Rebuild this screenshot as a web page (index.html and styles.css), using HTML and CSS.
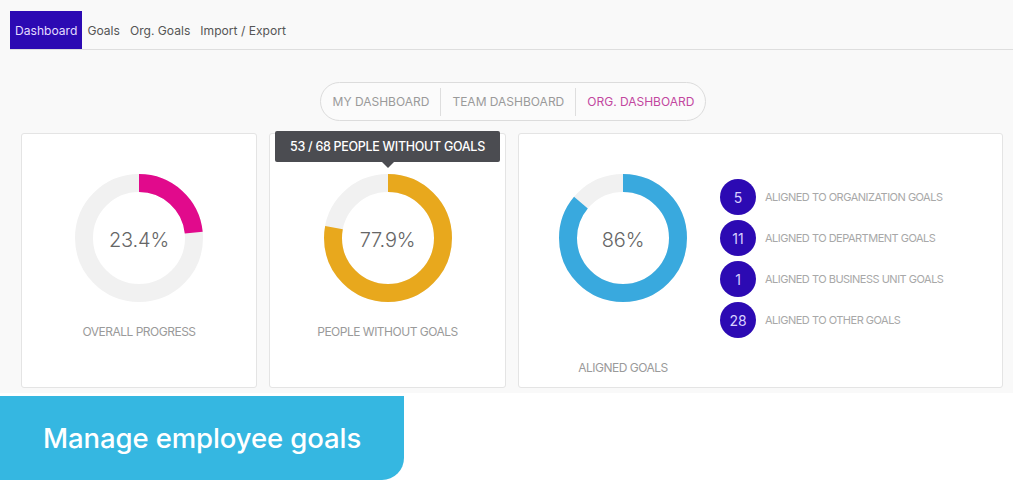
FILE: index.html
```html
<!DOCTYPE html>
<html lang="en">
<head>
    <meta charset="UTF-8">
    <meta name="viewport" content="width=device-width, initial-scale=1.0">
    <title>Goals Dashboard</title>
    <link rel="stylesheet" href="styles.css">
</head>
<body>
    <div class="screen">
        <nav class="tabs">
            <a href="#" class="tab active">Dashboard</a>
            <a href="#" class="tab">Goals</a>
            <a href="#" class="tab">Org. Goals</a>
            <a href="#" class="tab">Import / Export</a>
        </nav>

        <div class="content">
            <div class="switcher">
                <div class="pill">
                    <span class="pill-item">MY DASHBOARD</span>
                    <span class="pill-item">TEAM DASHBOARD</span>
                    <span class="pill-item selected">ORG. DASHBOARD</span>
                </div>
            </div>

            <div class="cards">
                <div class="card">
                    <div class="donut">
                        <svg width="128" height="128" viewBox="0 0 128 128">
                            <circle class="track" cx="64" cy="64" r="55"></circle>
                            <circle class="arc pink" cx="64" cy="64" r="55" style="stroke-dasharray: 80.9 345.6"></circle>
                        </svg>
                        <span class="value">23.4%</span>
                    </div>
                    <div class="card-label">OVERALL PROGRESS</div>
                </div>

                <div class="card">
                    <div class="tooltip">53 / 68 PEOPLE WITHOUT GOALS</div>
                    <div class="donut">
                        <svg width="128" height="128" viewBox="0 0 128 128">
                            <circle class="track" cx="64" cy="64" r="55"></circle>
                            <circle class="arc gold" cx="64" cy="64" r="55" style="stroke-dasharray: 269.2 345.6"></circle>
                        </svg>
                        <span class="value">77.9%</span>
                    </div>
                    <div class="card-label">PEOPLE WITHOUT GOALS</div>
                </div>

                <div class="card wide">
                    <div class="aligned">
                        <div class="donut">
                            <svg width="128" height="128" viewBox="0 0 128 128">
                                <circle class="track" cx="64" cy="64" r="55"></circle>
                                <circle class="arc blue" cx="64" cy="64" r="55" style="stroke-dasharray: 297.2 345.6"></circle>
                            </svg>
                            <span class="value">86%</span>
                        </div>
                        <div class="card-label low">ALIGNED GOALS</div>
                    </div>
                    <ul class="legend">
                        <li><span class="count">5</span>ALIGNED TO ORGANIZATION GOALS</li>
                        <li><span class="count">11</span>ALIGNED TO DEPARTMENT GOALS</li>
                        <li><span class="count">1</span>ALIGNED TO BUSINESS UNIT GOALS</li>
                        <li><span class="count">28</span>ALIGNED TO OTHER GOALS</li>
                    </ul>
                </div>
            </div>
        </div>
    </div>

    <div class="banner">Manage employee goals</div>
</body>
</html>
```

FILE: styles.css
```css
body {
    margin: 0;
    padding: 0;
    background: #fff;
    font-family: Inter, "Noto Sans", sans-serif;
    color: #555;
}

.screen {
    width: 1013px;
    height: 393px;
    background: #f9f9f9;
    box-sizing: border-box;
    padding-top: 11px;
}

/* top tabs */
.tabs {
    display: flex;
    margin-left: 10px;
    height: 38px;
    border-bottom: 1px solid #dedede;
}

.tab {
    display: flex;
    align-items: center;
    padding: 0 5px;
    font-size: 12.1px;
    letter-spacing: 0;
    color: #555;
    text-decoration: none;
}

.tab.active {
    background: #2c0ab3;
    color: #e4ddff;
}

.content {
    padding: 0 10px 0 21px;
}

/* dashboard switcher */
.switcher {
    display: flex;
    justify-content: center;
    padding-top: 32px;
    padding-left: 2px;
}

.pill {
    display: flex;
    align-items: center;
    height: 39px;
    padding: 0 11px 0 12px;
    border: 1px solid #dcdcdc;
    border-radius: 20px;
    box-sizing: border-box;
    background: #fbfbfb;
}

.pill-item {
    font-size: 12px;
    letter-spacing: 0;
    color: #9a9a9a;
    padding: 0 11px;
    line-height: 28px;
    border-left: 1px solid #dedede;
}

.pill-item:first-child {
    border-left: none;
    padding-left: 0;
}

.pill-item.selected {
    color: #c2479f;
    padding-right: 0;
}

/* cards */
.cards {
    display: grid;
    grid-template-columns: 236px 237px 1fr;
    gap: 12px;
    margin-top: 12px;
}

.card {
    position: relative;
    height: 255px;
    background: #fff;
    border: 1px solid #e4e4e4;
    border-radius: 3px;
    box-sizing: border-box;
    display: flex;
    flex-direction: column;
    align-items: center;
    padding-top: 40px;
}

.donut {
    position: relative;
    width: 128px;
    height: 128px;
}

.donut svg {
    display: block;
    transform: rotate(-90deg);
}

.track,
.arc {
    fill: none;
    stroke-width: 18;
}

.track {
    stroke: #f1f1f1;
}

.pink { stroke: #e10a8c; }
.gold { stroke: #e8a81d; }
.blue { stroke: #39a9de; }

.value {
    position: absolute;
    inset: 0;
    padding-top: 4px;
    display: flex;
    align-items: center;
    justify-content: center;
    font-size: 20px;
    font-weight: 300;
    color: #666;
    letter-spacing: -0.2px;
}

.card-label {
    margin-top: 22px;
    font-size: 12px;
    line-height: 16px;
    letter-spacing: -0.5px;
    color: #9a9a9a;
}

.card-label.low {
    margin-top: 58px;
}

.tooltip {
    position: absolute;
    top: -3px;
    left: 5px;
    width: 225px;
    height: 31px;
    background: #4b4c51;
    color: #fff;
    font-size: 12.5px;
    font-weight: 500;
    letter-spacing: -0.3px;
    border-radius: 2px;
    display: flex;
    align-items: center;
    justify-content: center;
}

.tooltip::after {
    content: "";
    position: absolute;
    top: 31px;
    left: 107px;
    border-left: 6px solid transparent;
    border-right: 6px solid transparent;
    border-top: 6px solid #4b4c51;
}

/* aligned goals card */
.card.wide {
    flex-direction: row;
    align-items: flex-start;
    padding-left: 40px;
}

.aligned {
    display: flex;
    flex-direction: column;
    align-items: center;
}

.legend {
    list-style: none;
    margin: 5px 0 0 33px;
    padding: 0;
    display: flex;
    flex-direction: column;
    gap: 5px;
}

.legend li {
    display: flex;
    align-items: center;
    font-size: 11px;
    letter-spacing: -0.5px;
    color: #a8a8a8;
}

.count {
    width: 36px;
    height: 36px;
    border-radius: 50%;
    background: #2c0ab3;
    color: #d8d0ff;
    font-size: 14px;
    letter-spacing: 0;
    display: flex;
    align-items: center;
    justify-content: center;
    margin-right: 9px;
}

/* caption banner */
.banner {
    width: 404px;
    height: 84px;
    margin-top: 3px;
    box-sizing: border-box;
    padding-left: 43px;
    display: flex;
    align-items: center;
    background: #35b7e1;
    border-bottom-right-radius: 22px;
    color: #fff;
    font-size: 27.5px;
    font-weight: 500;
    letter-spacing: -0.1px;
}
```
